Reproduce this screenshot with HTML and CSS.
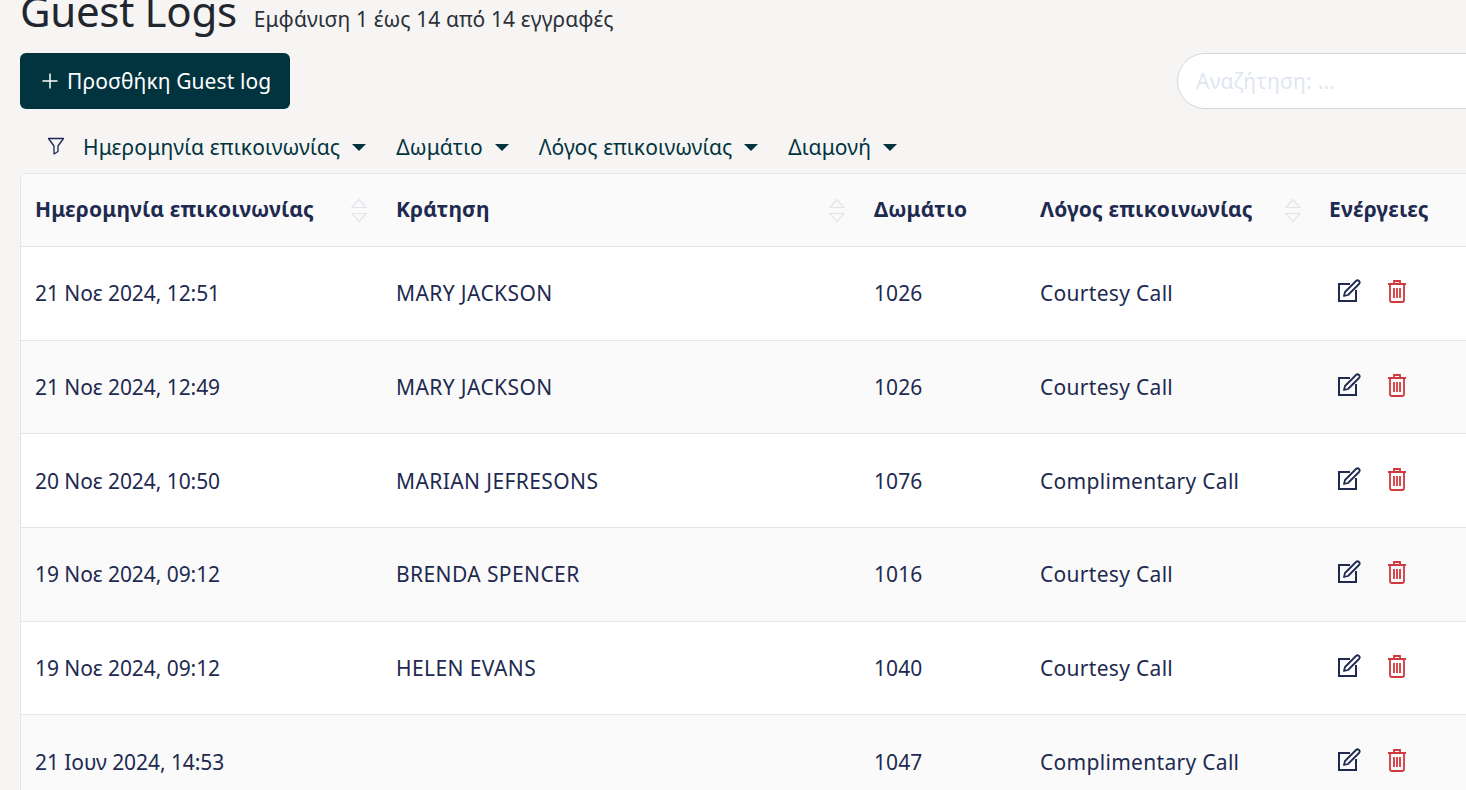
FILE: index.html
```html
<!DOCTYPE html>
<html lang="en">
<head>
  <meta charset="UTF-8">
  <title>Guest Logs</title>
  <link rel="stylesheet" href="styles.css">
</head>
<body>
  <svg class="defs" width="0" height="0">
    <symbol id="sort" viewBox="0 0 16 28">
      <path d="M1 11.5 8 3.5 15 11.5Z M1 17.5 8 25.5 15 17.5Z" fill="none" stroke="#e2e4ea" stroke-width="1.2"/>
    </symbol>
    <symbol id="edit" viewBox="0 0 24 24">
      <path d="M13 5H2v17h17V11" fill="none" stroke="currentColor" stroke-width="2"/>
      <path d="M8 13 19 2c1-1 2-1 3 0s1 2 0 3L11 16l-4 1z" fill="none" stroke="currentColor" stroke-width="1.8" stroke-linejoin="round"/>
    </symbol>
    <symbol id="trash" viewBox="0 0 20 24">
      <path d="M1 5h18M7 5V2h6v3M3 5v16c0 1 1 2 2 2h10c1 0 2-1 2-2V5M7 9v10M10 9v10M13 9v10" fill="none" stroke="currentColor" stroke-width="1.8"/>
    </symbol>
  </svg>

  <!-- page heading -->
  <header class="title-row">
    <h1>Guest Logs</h1>
    <span class="count">Εμφάνιση 1 έως 14 από 14 εγγραφές</span>
  </header>

  <div class="toolbar">
    <button class="btn-add">
      <svg width="18" height="18" viewBox="0 0 18 18"><path d="M9 1.5v15M1.5 9h15" stroke="#fff" stroke-width="1.5"/></svg>
      Προσθήκη Guest log
    </button>
    <input class="search" placeholder="Αναζήτηση: ...">
  </div>

  <!-- filters -->
  <div class="filters">
    <svg class="funnel" width="18" height="18" viewBox="0 0 18 18"><path d="M1.5 1.5h15L11 9v5.5l-4 2.5V9z" fill="none" stroke="#1e2a50" stroke-width="1.3" stroke-linejoin="round"/></svg>
    <span class="filter">Ημερομηνία επικοινωνίας</span>
    <span class="filter">Δωμάτιο</span>
    <span class="filter filter-tight">Λόγος επικοινωνίας</span>
    <span class="filter">Διαμονή</span>
  </div>

  <div class="table">
    <div class="row head">
      <div class="cell">Ημερομηνία επικοινωνίας<svg class="sort"><use href="#sort"/></svg></div>
      <div class="cell">Κράτηση<svg class="sort"><use href="#sort"/></svg></div>
      <div class="cell">Δωμάτιο</div>
      <div class="cell">Λόγος επικοινωνίας<svg class="sort"><use href="#sort"/></svg></div>
      <div class="cell">Ενέργειες</div>
    </div>
    <div class="row">
      <div class="cell">21 Νοε 2024, 12:51</div>
      <div class="cell">MARY JACKSON</div>
      <div class="cell">1026</div>
      <div class="cell">Courtesy Call</div>
      <div class="cell actions"><svg class="edit"><use href="#edit"/></svg><svg class="trash"><use href="#trash"/></svg></div>
    </div>
    <div class="row">
      <div class="cell">21 Νοε 2024, 12:49</div>
      <div class="cell">MARY JACKSON</div>
      <div class="cell">1026</div>
      <div class="cell">Courtesy Call</div>
      <div class="cell actions"><svg class="edit"><use href="#edit"/></svg><svg class="trash"><use href="#trash"/></svg></div>
    </div>
    <div class="row">
      <div class="cell">20 Νοε 2024, 10:50</div>
      <div class="cell">MARIAN JEFRESONS</div>
      <div class="cell">1076</div>
      <div class="cell">Complimentary Call</div>
      <div class="cell actions"><svg class="edit"><use href="#edit"/></svg><svg class="trash"><use href="#trash"/></svg></div>
    </div>
    <div class="row">
      <div class="cell">19 Νοε 2024, 09:12</div>
      <div class="cell">BRENDA SPENCER</div>
      <div class="cell">1016</div>
      <div class="cell">Courtesy Call</div>
      <div class="cell actions"><svg class="edit"><use href="#edit"/></svg><svg class="trash"><use href="#trash"/></svg></div>
    </div>
    <div class="row">
      <div class="cell">19 Νοε 2024, 09:12</div>
      <div class="cell">HELEN EVANS</div>
      <div class="cell">1040</div>
      <div class="cell">Courtesy Call</div>
      <div class="cell actions"><svg class="edit"><use href="#edit"/></svg><svg class="trash"><use href="#trash"/></svg></div>
    </div>
    <div class="row">
      <div class="cell">21 Ιουν 2024, 14:53</div>
      <div class="cell"></div>
      <div class="cell">1047</div>
      <div class="cell">Complimentary Call</div>
      <div class="cell actions"><svg class="edit"><use href="#edit"/></svg><svg class="trash"><use href="#trash"/></svg></div>
    </div>
  </div>
</body>
</html>
```
FILE: styles.css
```css
html, body {
  height: 100%;
  overflow: hidden;
}

body {
  margin: 0;
  padding: 0 0 0 20px;
  background: #f6f5f4;
  color: #1e2a50;
  font-family: "Noto Sans", sans-serif;
  font-size: 21px;
}

.defs {
  display: block;
  height: 0;
}

/* ===== Heading ===== */
.title-row {
  display: flex;
  align-items: baseline;
  gap: 17px;
  height: 53px;
  margin-top: -16px;
}

h1 {
  margin: 0;
  font-size: 42px;
  font-weight: 400;
  line-height: 53px;
  letter-spacing: -0.3px;
  color: #22262e;
}

.count {
  font-size: 21px;
  letter-spacing: 0.1px;
  color: #2b3038;
}

/* ===== Toolbar ===== */
.toolbar {
  display: flex;
  justify-content: space-between;
  align-items: center;
  height: 56px;
  margin-top: 16px;
  margin-right: -60px;
}

.btn-add {
  display: flex;
  align-items: center;
  gap: 8px;
  width: 270px;
  height: 56px;
  padding: 0 0 0 21px;
  border: 0;
  border-radius: 6px;
  background: #02343f;
  color: #fff;
  font: inherit;
  font-size: 21px;
  letter-spacing: 0.1px;
  white-space: nowrap;
}

.search {
  width: 349px;
  height: 56px;
  box-sizing: border-box;
  padding: 0 18px;
  border: 1px solid #d3d5da;
  border-radius: 28px;
  background: #fff;
  font: inherit;
  font-size: 21px;
  letter-spacing: 0.25px;
}

.search::placeholder {
  color: #dfe6f2;
  opacity: 1;
}

/* ===== Filters ===== */
.filters {
  display: flex;
  align-items: center;
  height: 64px;
  box-sizing: border-box;
  padding: 12px 0 0 27px;
  color: #02343f;
  font-size: 21px;
  letter-spacing: 0.15px;
}

.funnel {
  margin-right: 18px;
  margin-top: -2px;
}

.filter {
  display: flex;
  align-items: center;
  margin-right: 30px;
  white-space: nowrap;
}

.filter-tight {
  letter-spacing: 0.05px;
}

.filter::after {
  content: "";
  margin-left: 12px;
  border-top: 7px solid #02343f;
  border-left: 7px solid transparent;
  border-right: 7px solid transparent;
}

/* ===== Table ===== */
.table {
  width: 1480px;
  border: 1px solid #e3e5ec;
  border-radius: 6px 0 0 0;
  background: #fff;
}

.row {
  display: grid;
  grid-template-columns: 360px 478px 166px 290px 1fr;
  height: 93.67px;
  box-sizing: border-box;
  border-bottom: 1px solid #e3e5ec;
}

.row:nth-child(odd) {
  background: #fafafa;
}

.row.head {
  height: 73px;
  padding-bottom: 3px;
  background: #fafafa;
  font-weight: 700;
}

.cell {
  position: relative;
  display: flex;
  align-items: center;
  padding-left: 15px;
  letter-spacing: 0.1px;
  white-space: nowrap;
}

.cell:first-child,
.cell:last-child {
  padding-left: 14px;
}

.row:not(.head) .cell:first-child {
  letter-spacing: -0.07px;
}

.row:not(.head) .cell:nth-child(2) {
  letter-spacing: 0.4px;
}

.row:not(.head) .cell:nth-child(4) {
  letter-spacing: 0.3px;
}

.head .cell {
  letter-spacing: 0.15px;
}

.sort {
  position: absolute;
  right: 14px;
  top: 22px;
  width: 16px;
  height: 28px;
}

.row:not(.head) .actions {
  gap: 26px;
  padding-left: 22px;
  padding-bottom: 4px;
}

.edit {
  width: 24px;
  height: 24px;
  color: #1e2a50;
}

.trash {
  width: 20px;
  height: 24px;
  color: #d0393e;
}
```
